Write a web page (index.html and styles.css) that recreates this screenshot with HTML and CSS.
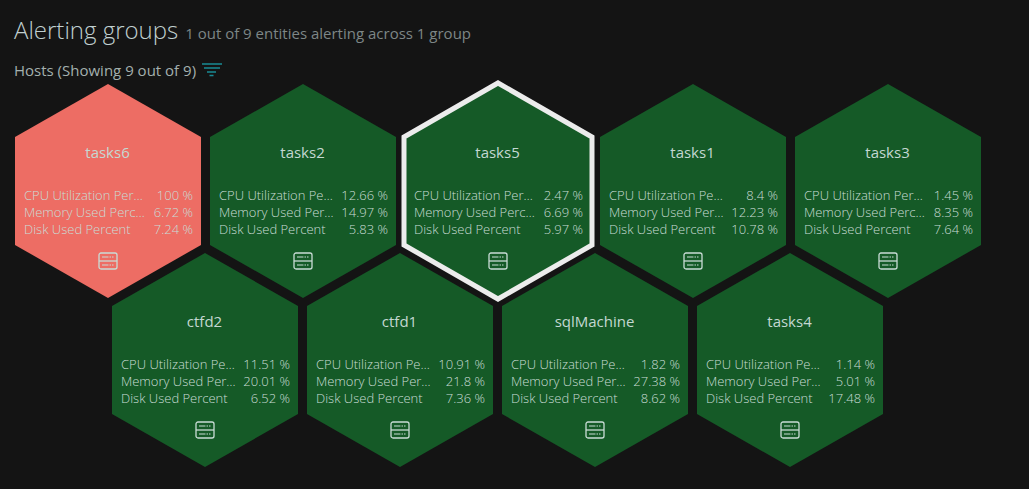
FILE: index.html
```
<!DOCTYPE html>
<html lang="en">
<head>
<meta charset="utf-8">
<meta name="viewport" content="width=device-width, initial-scale=1">
<title>Alerting groups</title>
<link rel="stylesheet" href="styles.css">
</head>
<body>
<main class="panel">
  <header class="panel-header">
    <h1 class="panel-title">Alerting groups</h1>
    <p class="panel-summary">1 out of 9 entities alerting across 1 group</p>
  </header>
  <section class="group">
    <div class="group-header">
      <h2 class="group-title">Hosts (Showing 9 out of 9)</h2>
      <button class="filter" type="button" aria-label="Filter hosts">
        <svg width="20" height="14" viewBox="0 0 20 14" aria-hidden="true"><path d="M0 1h20M2 5h16M5 9h9M7.500 12.500h4"/></svg>
      </button>
    </div>
    <div class="honeycomb" id="honeycomb"></div>
  </section>
</main>
<script src="app.js"></script>
</body>
</html>
```
FILE: styles.css
```
* {
  box-sizing: border-box;
}

body {
  margin: 0;
  min-height: 100vh;
  background: #141414;
  color: #b4c4c4;
  font-family: "Open Sans", sans-serif;
}

h1,
h2,
h3,
p {
  margin: 0;
  font-weight: 400;
}

.panel {
  padding: 13px 14px 20px;
}

.panel-header {
  display: flex;
  align-items: baseline;
  gap: 7px;
}

.panel-title {
  font-size: 24px;
  line-height: 34px;
  font-weight: 300;
  color: #c0d0d0;
}

.panel-summary {
  font-size: 15px;
  color: #7d8686;
}

.group {
  padding-top: 12px;
}

.group-header {
  display: flex;
  align-items: center;
  gap: 6px;
}

.group-title {
  font-size: 15px;
  line-height: 22px;
  color: #a3b0ae;
}

.filter {
  display: flex;
  padding: 0;
  border: 0;
  background: none;
  cursor: pointer;
}

.filter path {
  fill: none;
  stroke: #188a94;
  stroke-width: 1.5;
}

.honeycomb {
  padding-top: 2px;
}

.hex-row {
  display: flex;
  gap: 8px;
  margin: 0;
  padding: 0;
  list-style: none;
}

.hex-row + .hex-row {
  margin-top: -46px;
  padding-left: 97px;
}

.hex {
  display: grid;
  flex: none;
  width: 187px;
}

.hex > * {
  grid-area: 1 / 1;
}

.hex-shape {
  display: block;
  width: 100%;
  overflow: visible;
  fill: #155a27;
}

.hex-alert .hex-shape {
  fill: #ed6d64;
}

.hex-selected .hex-shape {
  stroke: #ececec;
  stroke-width: 5;
}

.hex-content {
  display: flex;
  flex-direction: column;
  align-items: center;
  padding: 58px 8px 0 10px;
}

.hex-name {
  margin-right: 2px;
  font-size: 15px;
  line-height: 22px;
  color: #c4d8d2;
}

.metrics {
  width: 100%;
  margin-top: 24px;
  border-collapse: collapse;
  font-size: 13px;
  line-height: 17px;
  font-weight: 300;
  color: #c9dcd6;
}

.metrics th,
.metrics td {
  padding: 0;
  white-space: nowrap;
}

.metrics th {
  text-align: left;
  font-weight: 300;
}

.metrics td {
  text-align: right;
}

.host-icon {
  margin: 14px 2px 0 0;
  fill: none;
  stroke: #c9dcd6;
}
```
FILE: app.js
```
const labels = {
  long: ["CPU Utilization Per…", "Memory Used Perc…", "Disk Used Percent"],
  short: ["CPU Utilization Pe…", "Memory Used Per…", "Disk Used Percent"]
};

const rows = [
  [
    { name: "tasks6", values: ["100", "6.72", "7.24"], state: "hex-alert" },
    { name: "tasks2", values: ["12.66", "14.97", "5.83"] },
    { name: "tasks5", values: ["2.47", "6.69", "5.97"], state: "hex-selected" },
    { name: "tasks1", values: ["8.4", "12.23", "10.78"] },
    { name: "tasks3", values: ["1.45", "8.35", "7.64"] }
  ],
  [
    { name: "ctfd2", values: ["11.51", "20.01", "6.52"] },
    { name: "ctfd1", values: ["10.91", "21.8", "7.36"] },
    { name: "sqlMachine", values: ["1.82", "27.38", "8.62"] },
    { name: "tasks4", values: ["1.14", "5.01", "17.48"] }
  ]
];

// Wide values leave less room for the label column.
const labelsFor = (values) => (values.some((value) => value.length > 4) ? labels.short : labels.long);

const hostIcon = `<svg class="host-icon" width="20" height="18" viewBox="0 0 20 18" aria-hidden="true">
  <rect x="1" y="1" width="18" height="16" rx="2" stroke-width="1.3"/>
  <path d="M1 9h18" stroke-width="1.3"/>
  <path d="M4 5h6.500M11.500 5h1.500M14 5h1.500M4 13h6.500M11.500 13h1.500M14 13h1.500" stroke-width="1.200"/>
</svg>`;

const hexPoints = "94,1 187,54 187,162 94,215 1,162 1,54";
const selectedPoints = "94,0 188,54 188,162 94,216 0,162 0,54";

const hex = (host) => `<li class="hex ${host.state || ""}">
  <svg class="hex-shape" viewBox="0 0 187 215" aria-hidden="true">
    <polygon points="${host.state === "hex-selected" ? selectedPoints : hexPoints}"/>
  </svg>
  <div class="hex-content">
    <h3 class="hex-name">${host.name}</h3>
    <table class="metrics"><tbody>
      ${labelsFor(host.values).map((label, i) => `<tr><th scope="row">${label}</th><td>${host.values[i]} %</td></tr>`).join("")}
    </tbody></table>
    ${hostIcon}
  </div>
</li>`;

document.getElementById("honeycomb").innerHTML = rows
  .map((row) => `<ul class="hex-row">${row.map(hex).join("")}</ul>`)
  .join("");
```
